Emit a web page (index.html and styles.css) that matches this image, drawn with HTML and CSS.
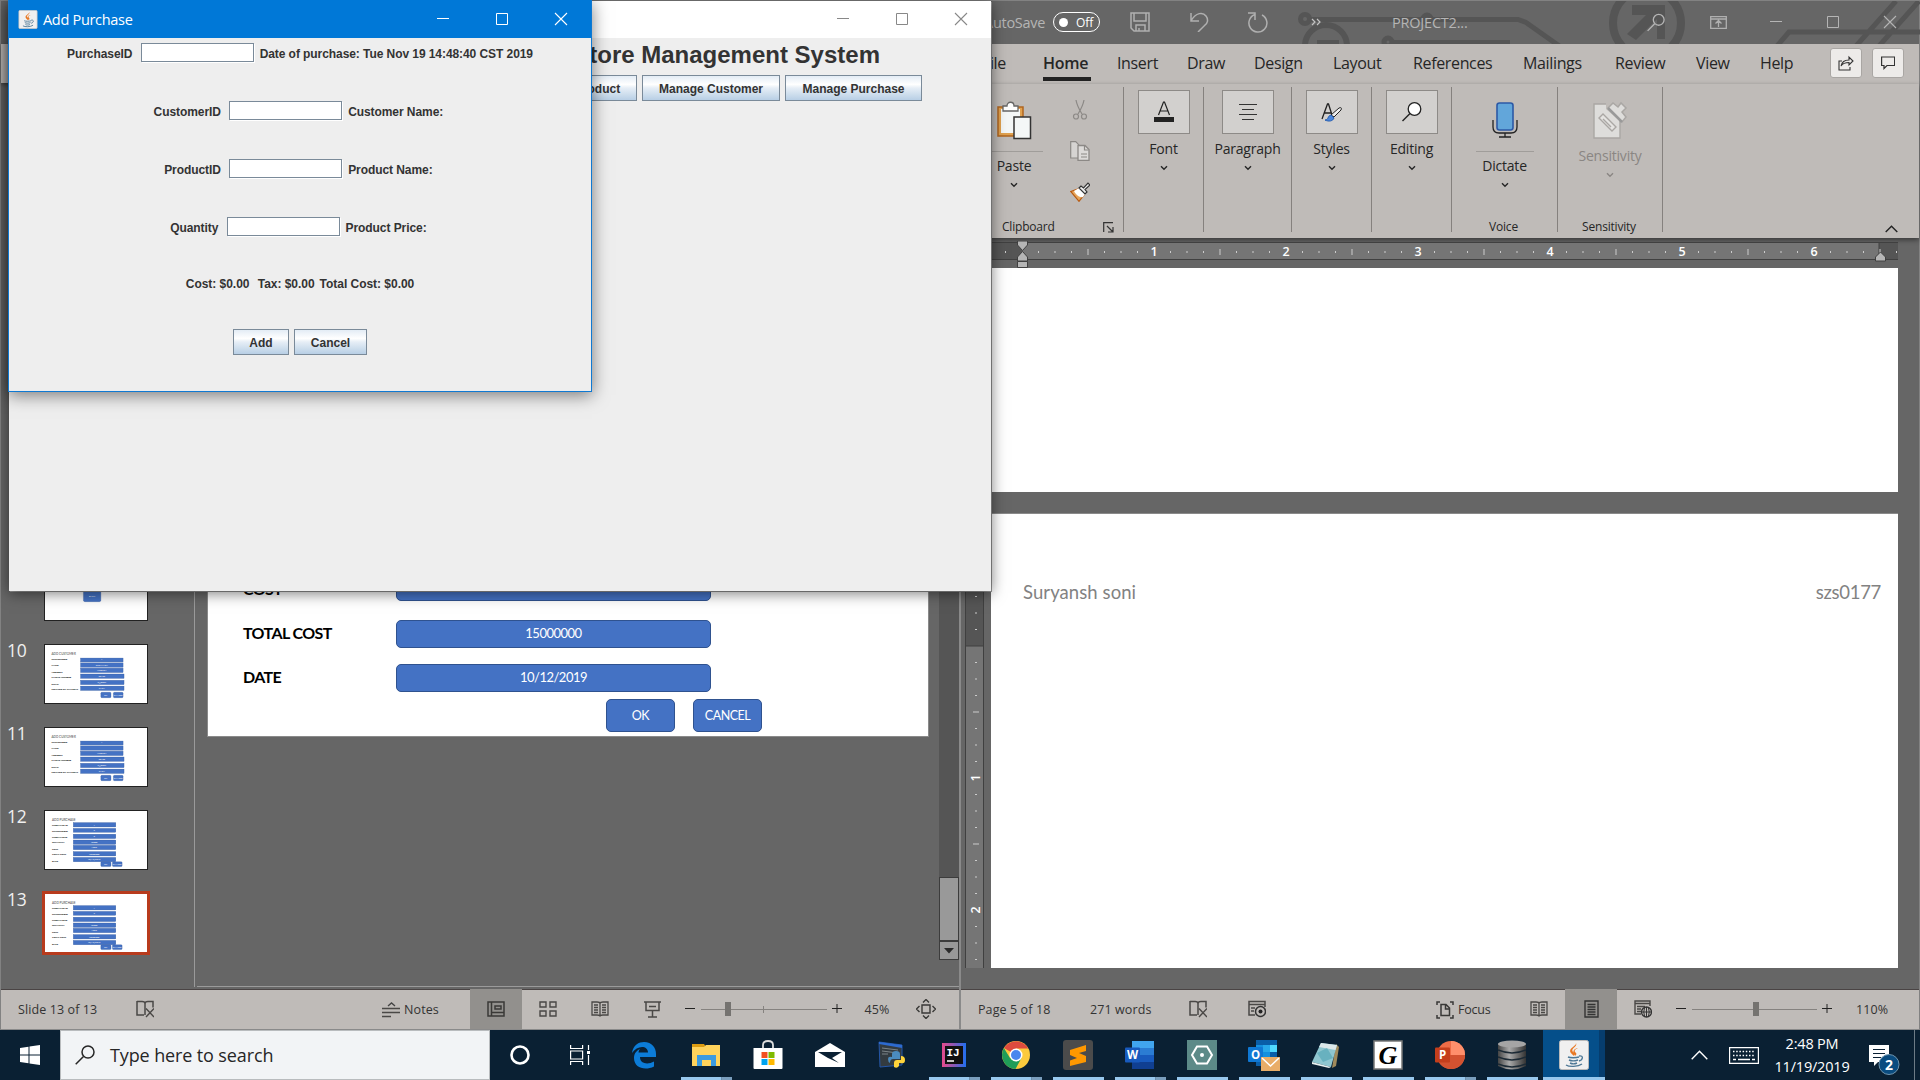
FILE: index.html
```html
<!DOCTYPE html>
<html lang="en">
<head>
<meta charset="utf-8">
<title>Desktop</title>
<link rel="stylesheet" href="styles.css">
</head>
<body>
<svg class="defs" width="0" height="0">
  <symbol id="chev" viewBox="0 0 8 6"><path d="M1 1.2l3 3 3-3" fill="none" stroke="currentColor" stroke-width="1.4"/></symbol>
  <symbol id="min" viewBox="0 0 14 14"><path d="M1 6.5h12" stroke="currentColor"/></symbol>
  <symbol id="max" viewBox="0 0 14 14"><path d="M1.5 1.5h11v11h-11z" fill="none" stroke="currentColor"/></symbol>
  <symbol id="cls" viewBox="0 0 14 14"><path d="M1 1l12 12M13 1L1 13" stroke="currentColor" stroke-width="1.1"/></symbol>
  <symbol id="java" viewBox="0 0 30 30">
    <rect x=".5" y=".5" width="29" height="29" rx="2" fill="#f0f0f0" stroke="#b9b9b9"/>
    <path d="M17 3c2 4-6 5-3 9 1 2 2 2 1 4-5-4-5-6-1-9 2-2 3-2 3-4zM19 8c-4 2-4 3-2 5 1 1 0 2-1 3 0-2-3-3-1-6 1-1 2-2 4-2z" fill="#e87722"/>
    <path d="M9 17c2 1 8 1 11 0M10 20c2 1 6 1 9 0M11 23c2 1 5 1 7 0M20 16c5-1 4 4 0 5M7 25c3 2 12 2 16-1" fill="none" stroke="#4d7896" stroke-width="1.4"/>
  </symbol>
  <symbol id="proof" viewBox="0 0 18 18"><path d="M9 3v12M1 1.500h5q3 0 3 2 0-2 3-2h5v6M1 1v14h7M9 14.500" fill="none" stroke="#4a4846" stroke-width="1.500"/><path d="M10 8.500l8 8.500M18 8.500L10 17" stroke="#4a4846" stroke-width="1.400"/></symbol>
  <symbol id="read" viewBox="0 0 18 18"><path d="M9 3v13M1 2h5q3 0 3 1.500Q9 2 12 2h5v13h-5q-3 0-3 1.500Q9 15 6 15H1zM3 5h4M3 7.500h4M3 10h4M3 12.500h4M11 5h4M11 7.500h4M11 10h4M11 12.500h4" fill="none" stroke="#4a4846" stroke-width="1.300"/></symbol>
  <symbol id="mag" viewBox="0 0 20 20"><circle cx="13" cy="7" r="6" fill="none" stroke="currentColor" stroke-width="1.500"/><path d="M8.500 11.500L.7 19.300" stroke="currentColor" stroke-width="1.500"/></symbol>
</svg>

<main class="desktop">
  <section class="app ppt">
    <div class="ppt-title"></div>
    <div class="ppt-ribbon"></div>
    <div class="ppt-body">
      <aside class="slides">
        <div class="slide-item"><span></span>
          <svg class="thumb" viewBox="0 0 104 60"><rect class="bar" x="39" y="28" width="18" height="13" rx="1.500"/><text class="tw" x="48" y="36.500">BACK</text></svg></div>
        <div class="slide-item"><span>10</span>
          <svg class="thumb" viewBox="0 0 104 60"><text class="tt" x="6" y="10">ADD CUSTOMER</text>
            <g class="tl"><text x="6" y="16">CUSTOMERID</text><text x="6" y="22">NAME</text><text x="6" y="28.500">ADDRESS</text><text x="6" y="34.500">PHONE NUMBER</text><text x="6" y="41">EMAIL</text><text x="6" y="47">METHOD OF PAYMENT</text></g>
            <g class="bar"><rect x="36" y="13.500" width="44" height="4"/><rect x="36" y="18.500" width="44" height="4.500"/><rect x="36" y="24" width="44" height="4.500"/><rect x="36" y="30" width="45" height="4.500"/><rect x="36" y="36.500" width="45" height="4.500"/><rect x="36" y="42.500" width="45" height="4.500"/><rect x="57" y="49" width="10.500" height="5.500" rx="1"/><rect x="70" y="49" width="10" height="5.500" rx="1"/></g>
            <g class="tw"><text x="58" y="16">1</text><text x="58" y="21.500">SURYANSH</text><text x="58" y="27">AUBURN</text><text x="58" y="33">33456</text><text x="58" y="39.500">S@gmail</text><text x="58" y="45.500">CASH</text><text x="62" y="52.500">OK</text><text x="75" y="52.500">CANCEL</text></g></svg></div>
        <div class="slide-item"><span>11</span>
          <svg class="thumb" viewBox="0 0 104 60"><text class="tt" x="6" y="10">ADD CUSTOMER</text>
            <g class="tl"><text x="6" y="16">CUSTOMERID</text><text x="6" y="22">NAME</text><text x="6" y="28.500">ADDRESS</text><text x="6" y="34.500">PHONE NUMBER</text><text x="6" y="41">EMAIL</text><text x="6" y="47">METHOD OF PAYMENT</text></g>
            <g class="bar"><rect x="36" y="13.500" width="44" height="4"/><rect x="36" y="18.500" width="44" height="4.500"/><rect x="36" y="24" width="44" height="4.500"/><rect x="36" y="30" width="45" height="4.500"/><rect x="36" y="36.500" width="45" height="4.500"/><rect x="36" y="42.500" width="45" height="4.500"/><rect x="57" y="49" width="10.500" height="5.500" rx="1"/><rect x="70" y="49" width="10" height="5.500" rx="1"/></g>
            <g class="tw"><text x="58" y="16">1</text><text x="58" y="27">AUBURN</text><text x="58" y="33">33456</text><text x="58" y="39.500">S@gmail</text><text x="58" y="45.500">CASH</text><text x="62" y="52.500">OK</text><text x="75" y="52.500">CANCEL</text></g></svg></div>
        <div class="slide-item"><span>12</span>
          <svg class="thumb" viewBox="0 0 104 60"><text class="tt" x="6.500" y="10">ADD PURCHASE</text>
            <g class="tl"><text x="6.500" y="15">PURCHASE ID</text><text x="6.500" y="21.500">CUSTOMERID</text><text x="6.500" y="27.500">PURCHASEID</text><text x="6.500" y="33.500">QUANTITY</text><text x="6.500" y="40">COST</text><text x="6.500" y="46">TOTAL COST</text><text x="6.500" y="52.500">DATE</text></g>
            <g class="bar"><rect x="28.500" y="12" width="44" height="4.500"/><rect x="28.500" y="18" width="44" height="4"/><rect x="28.500" y="24" width="44" height="4.500"/><rect x="28.500" y="30" width="44" height="4.500"/><rect x="28.500" y="35.500" width="44" height="4.500"/><rect x="28.500" y="42" width="44" height="4.500"/><rect x="28.500" y="48" width="44" height="4.500"/><rect x="57" y="52.500" width="10.500" height="5" rx="1"/><rect x="69" y="52.500" width="10" height="5" rx="1"/></g>
            <g class="tw"><text x="50" y="15">1</text><text x="50" y="21">2</text><text x="50" y="27">3</text><text x="50" y="33">10000</text><text x="50" y="38.500">1500</text><text x="50" y="45">15000000</text><text x="50" y="51">10/12/2019</text><text x="62" y="56">OK</text><text x="74" y="56">CANCEL</text></g></svg></div>
        <div class="slide-item current"><span>13</span>
          <svg class="thumb" viewBox="0 0 104 60"><text class="tt" x="6.500" y="10">ADD PURCHASE</text>
            <g class="tl"><text x="6.500" y="15">PURCHASE ID</text><text x="6.500" y="21.500">CUSTOMERID</text><text x="6.500" y="27.500">PURCHASEID</text><text x="6.500" y="33.500">QUANTITY</text><text x="6.500" y="40">COST</text><text x="6.500" y="46">TOTAL COST</text><text x="6.500" y="52.500">DATE</text></g>
            <g class="bar"><rect x="28.500" y="12" width="44" height="4.500"/><rect x="28.500" y="18" width="44" height="4"/><rect x="28.500" y="24" width="44" height="4.500"/><rect x="28.500" y="30" width="44" height="4.500"/><rect x="28.500" y="35.500" width="44" height="4.500"/><rect x="28.500" y="42" width="44" height="4.500"/><rect x="28.500" y="48" width="44" height="4.500"/><rect x="57" y="52.500" width="10.500" height="5" rx="1"/><rect x="69" y="52.500" width="10" height="5" rx="1"/></g>
            <g class="tw"><text x="50" y="15">1</text><text x="50" y="21">2</text><text x="50" y="33">10000</text><text x="50" y="38.500">1500</text><text x="50" y="45">15000000</text><text x="50" y="51">10/12/2019</text><text x="62" y="56">OK</text><text x="74" y="56">CANCEL</text></g></svg></div>
      </aside>
      <div class="stage">
        <div class="slide">
          <div class="srow first"><b>COST</b><div class="sfield"></div></div>
          <div class="srow"><b>TOTAL COST</b><div class="sfield">15000000</div></div>
          <div class="srow"><b>DATE</b><div class="sfield">10/12/2019</div></div>
          <div class="sbtns"><div>OK</div><div>CANCEL</div></div>
        </div>
        <div class="vscroll"><div class="track"></div><div class="grip"></div><div class="down"><svg width="10" height="7"><path d="M0 1h10L5 6.500z" fill="#2b2b2b"/></svg></div></div>
      </div>
    </div>
    <footer class="status status-ppt">
      <span>Slide 13 of 13</span>
      <svg width="18" height="18"><use href="#proof"/></svg>
      <span class="notes"><svg width="18" height="16" viewBox="0 0 18 16"><path d="M6 4l3.500-3L13 4" fill="none" stroke="#444" stroke-width="1.400"/><path d="M0 6.500h18M0 10.500h18M0 14.500h9" stroke="#4a4846" stroke-width="1.500"/></svg>Notes</span>
      <i class="cell on"><svg width="18" height="16" viewBox="0 0 18 16"><path d="M1 1h16v14H1zM4.500 1v14M4.500 11.500H17M8 5h6v3H8z" fill="none" stroke="#3a3937" stroke-width="1.500"/></svg></i>
      <i class="cell"><svg width="18" height="16" viewBox="0 0 18 16"><path d="M1 1h6v5H1zM11 1h6v5h-6zM1 10h6v5H1zM11 10h6v5h-6z" fill="none" stroke="#4a4846" stroke-width="1.400"/></svg></i>
      <i class="cell"><svg width="18" height="18"><use href="#read"/></svg></i>
      <i class="cell"><svg width="17" height="17" viewBox="0 0 17 17"><path d="M0 1h17M2 1v8.500h13V1M5 5.500h7M8.500 9.500V16M4 16h9" fill="none" stroke="#4a4846" stroke-width="1.500"/></svg></i>
      <i class="cell"><svg width="10" height="10"><path d="M0 4.500h10" stroke="#222"/></svg></i>
      <i class="slider slider-mid"><i></i></i>
      <i class="cell"><svg width="10" height="10"><path d="M0 4.500h10M5 0v9" stroke="#222"/></svg></i>
      <span class="pct">45%</span>
      <i class="cell"><svg width="20" height="20" viewBox="0 0 20 20"><path d="M6 6h8v8H6zM7 3.500l3-3 3 3M7 16.500l3 3 3-3M3.500 7l-3 3 3 3M16.500 7l3 3-3 3" fill="none" stroke="#3a3937" stroke-width="1.400"/></svg></i>
    </footer>
  </section>

  <section class="app word">
    <header class="word-title">
      <svg class="circuit" viewBox="0 0 959 43" width="959" height="43"><g fill="none" stroke="#555" stroke-width="5"><circle cx="344" cy="18" r="4.500"/><path d="M349 18.500h114M471 18.500h86l8 3 34 24"/><circle cx="466" cy="18" r="4"/><circle cx="427" cy="41" r="4"/><path d="M431 41.500h118"/><path d="M344 45a19 19 0 0 1 42 0" stroke-width="6"/><circle cx="686" cy="22" r="34" stroke-width="8"/><path d="M816 45l12-14h131M895 45L935 0M918 45L958 0"/></g><path d="M671 4h33v34h-8V18l-21 21-9-6 19-19h-14zM356 39h22v6h-22z" fill="#555"/></svg>
      <span class="autosave">AutoSave</span>
      <span class="toggle"><i></i>Off</span>
      <svg width="20" height="20" viewBox="0 0 20 20"><path d="M1 1h18v18H4l-3-3zM4 1v8h12V1M6 19v-6h9v6M9 19v-3" fill="none" stroke="#b0b0b0" stroke-width="1.500"/></svg>
      <svg width="20" height="20" viewBox="0 0 20 20"><path d="M1 1v8h8M1 9c5-9 12-9 15-5s1 8-1 9l-7 7" fill="none" stroke="#b0b0b0" stroke-width="1.500"/></svg>
      <svg width="21" height="21" viewBox="0 0 21 21"><path d="M1 1h7v7M8 2.500A9 9 0 1 0 15 3" fill="none" stroke="#b0b0b0" stroke-width="1.500"/></svg>
      <svg width="10" height="8" viewBox="0 0 10 8"><path d="M1 1l3 3-3 3M6 1l3 3-3 3" fill="none" stroke="#c4c4c4" stroke-width="1.200"/></svg>
      <span class="doc">PROJECT2...</span>
      <svg width="18" height="19"><use href="#mag"/></svg>
      <svg width="17" height="13" viewBox="0 0 17 13"><path d="M.7.7h15.600v11.600H.7zM1 3h15M8.500 11V5M5.500 7.500l3-3 3 3" fill="none" stroke="#b0b0b0" stroke-width="1.300"/></svg>
      <svg width="14" height="14"><use href="#min"/></svg>
      <svg width="14" height="14"><use href="#max"/></svg>
      <svg width="14" height="14"><use href="#cls"/></svg>
    </header>
    <nav class="tabs">
      <span>File</span><span class="active">Home</span><span>Insert</span><span>Draw</span><span>Design</span><span>Layout</span><span>References</span><span>Mailings</span><span>Review</span><span>View</span><span>Help</span>
      <button class="tool"><svg width="16" height="16" viewBox="0 0 16 16"><path d="M4 6H1v9h11v-3M3 11c1-5 4-6 8-6V2l4 4-4 4V7.500c-4 0-6 .5-8 3.500z" fill="none" stroke="#333" stroke-width="1.100"/></svg></button>
      <button class="tool"><svg width="14" height="14" viewBox="0 0 14 14"><path d="M.6 1h13v8.500H6L3 12.500v-3H.6z" fill="none" stroke="#333" stroke-width="1.200"/></svg></button>
    </nav>
    <div class="ribbon">
      <div class="group clip">
        <div class="clip-main">
          <div class="split paste">
            <svg width="36" height="40" viewBox="0 0 36 40"><path d="M2 6h25v29H2z" fill="#e0a14f" stroke="#b0651f" stroke-width="1.500"/><path d="M5 8h19v24H5z" fill="#f4f7f7"/><path d="M7 10V5h4c0-5 7-5 7 0h4v5z" fill="#fff" stroke="#666" stroke-width="1.300"/><path d="M18 16h16.500v21.500H18z" fill="#f4f7f7" stroke="#333" stroke-width="1.500"/></svg>
            <hr><span>Paste</span><svg width="8" height="6"><use href="#chev"/></svg>
          </div>
          <div class="clip-tools">
            <svg width="20" height="20" viewBox="0 0 20 20"><g fill="none" stroke="#8c8986" stroke-width="1.200"><path d="M6 0c1 6 3 9 6 14M14 0c-1 6-3 9-6 14"/><circle cx="6" cy="16.500" r="2.500"/><circle cx="14" cy="16.500" r="2.500"/></g></svg>
            <svg width="20" height="20" viewBox="0 0 20 20"><path d="M.7.7h5l3 3V17h-8z" fill="#d6d4d2" stroke="#8c8986" stroke-width="1.200"/><path d="M8 4.500h7l4 4v11H8z" fill="#dddbd9" stroke="#8c8986" stroke-width="1.300"/><path d="M14.500 5v4h4M11 13h6M11 16h6" fill="none" stroke="#8c8986" stroke-width="1.200"/></svg>
            <svg width="20" height="20" viewBox="0 0 20 20"><path d="M.7 9.500L8 7l6 6-5 6.300z" fill="#e6a65c" stroke="#b85a10" stroke-width="1.200"/><path d="M4 9l5-3 6 6-2 3c-3 1-7-2-9-6z" fill="#fff"/><path d="M9 6l2-2 2.500 2L18 1l2 2-5 4.500L17 10l-2 2z" fill="#eee" stroke="#333" stroke-width="1.200"/></svg>
          </div>
        </div>
        <div class="caption clip-cap">Clipboard<svg width="11" height="11" viewBox="0 0 11 11"><path d="M10 .7H.7V10M4 4l6 6M10 5v5H5" fill="none" stroke="#333" stroke-width="1.200"/></svg></div>
      </div>
      <div class="group"><div class="big"><svg width="20" height="22" viewBox="0 0 20 22"><path d="M4.500 14L9.500 1h1l5 13M6 10h8" fill="none" stroke="#222" stroke-width="1.200"/><path d="M0 16h20v5H0z" fill="#222"/></svg></div><span>Font</span><svg width="8" height="6"><use href="#chev"/></svg></div>
      <div class="group"><div class="big"><svg width="18" height="18" viewBox="0 0 18 18"><path d="M0 1.500h18M3 6.500h12M0 11.500h18M3 16.500h12" stroke="#333" stroke-width="1.200"/></svg></div><span>Paragraph</span><svg width="8" height="6"><use href="#chev"/></svg></div>
      <div class="group"><div class="big"><svg width="21" height="20" viewBox="0 0 21 20"><path d="M1 17L6.500 2h1L11 13M3 11h7" fill="none" stroke="#222" stroke-width="1.300"/><path d="M10 13l8-7c2-1 3 0 2 2l-7 7z" fill="#eee" stroke="#222"/><path d="M4 18c4 0 2-4 6-5l3 3c-1 3-5 4-9 2z" fill="#4a86dc" stroke="#225bb0"/></svg></div><span>Styles</span><svg width="8" height="6"><use href="#chev"/></svg></div>
      <div class="group"><div class="big"><svg width="20" height="20" viewBox="0 0 20 20"><circle cx="12.500" cy="7" r="6.300" fill="#fff" stroke="#222" stroke-width="1.300"/><path d="M8 11.500L.5 19" stroke="#222" stroke-width="1.400"/></svg></div><span>Editing</span><svg width="8" height="6"><use href="#chev"/></svg></div>
      <div class="group voice">
        <div class="split"><svg width="26" height="40" viewBox="0 0 26 40"><rect x="5" y="2" width="16" height="27" rx="2.500" fill="#62a6da" stroke="#2c59a6" stroke-width="1.600"/><path d="M1 19v7q0 6 6 6h12q6 0 6-6v-7M13 32v4M7 36h12" fill="none" stroke="#222" stroke-width="1.300"/></svg>
        <hr><span>Dictate</span><svg width="8" height="6"><use href="#chev"/></svg></div>
        <div class="caption">Voice</div>
      </div>
      <div class="group voice sens">
        <div class="split"><svg width="36" height="40" viewBox="0 0 36 40"><path d="M2 3h26v34H2z" fill="#dedddb" stroke="#aaa7a4" stroke-width="1.400"/><path d="M14 0h22v22h-6L14 8z" fill="#bfbbb8"/><path d="M7 17l4-4 13 13-4 4zM11 18l8 8" fill="#e5e4e2" stroke="#aaa7a4" stroke-width="1.400"/><path d="M16 7l5-5 5 4 3-4 5 5-4 4 4 5-4 5z" fill="#dedddb" stroke="#aaa7a4" stroke-width="1.500"/><path d="M16 7l14 14" stroke="#999" stroke-width="2.500"/></svg>
        <span>Sensitivity</span><svg width="8" height="6"><use href="#chev"/></svg></div>
        <div class="caption">Sensitivity</div>
      </div>
      <svg class="collapse" width="13" height="8" viewBox="0 0 13 8"><path d="M.7 7L6.500 1.300 12.300 7" fill="none" stroke="#222" stroke-width="1.400"/></svg>
    </div>
    <div class="word-body">
      <svg class="vruler" width="19" height="730" viewBox="0 238 19 730">
        <defs><pattern id="vt" width="19" height="132" patternUnits="userSpaceOnUse" y="646"><path d="M10 16.500h2M10 33h2M10 49.500h2M8 66h6M10 82.500h2M10 99h2M10 115.500h2" stroke="#ccc"/></pattern></defs>
        <path d="M0 238h19v408H0z" fill="#555"/><path d="M0 646h19v322H0z" fill="#757575"/><path d="M.5 238v730M18.500 238v730M0 646h19" stroke="#404040"/>
        <rect y="238" width="19" height="730" fill="url(#vt)"/>
        <text transform="translate(15 778) rotate(-90)">1</text><text transform="translate(15 910) rotate(-90)">2</text>
      </svg>
      <div class="doc-col">
        <svg class="hruler" width="907" height="27" viewBox="991 241 907 27">
          <defs><pattern id="ht" width="132" height="20" patternUnits="userSpaceOnUse" x="1022" y="242"><path d="M16.500 9v2M33 9v2M49.500 9v2M66 7v6M82.500 9v2M99 9v2M115.500 9v2" stroke="#ccc"/></pattern></defs>
          <path d="M991 242h907v18H991z" fill="#555"/><path d="M1022 242h857v18h-857z" fill="#757575"/><path d="M991 242.500h907M991 259.500h907M1879 242v18" stroke="#404040"/>
          <rect x="991" y="242" width="907" height="18" fill="url(#ht)"/>
          <text x="1154" y="256">1</text><text x="1286" y="256">2</text><text x="1418" y="256">3</text><text x="1550" y="256">4</text><text x="1682" y="256">5</text><text x="1814" y="256">6</text>
          <path d="M1017.500 241v4l5 5.500 5-5.500v-4zM1017.500 261v-4l5-5.500 5 5.500v4zM1017.500 261.500h10v6h-10zM1875.500 261v-4l5-5 5 5v4z" fill="#b5b5b5" stroke="#404040"/>
        </svg>
        <div class="page page-a"></div>
        <div class="page page-b"><span>Suryansh soni</span><span>szs0177</span></div>
      </div>
    </div>
    <footer class="status status-word">
      <span>Page 5 of 18</span><span>271 words</span>
      <svg width="18" height="18"><use href="#proof"/></svg>
      <svg width="18" height="18" viewBox="0 0 18 18"><path d="M17 7V1.500H1V15h6M1 4.500h16M3 8h4M3 11h3" fill="none" stroke="#4a4846" stroke-width="1.500"/><circle cx="12.500" cy="11.500" r="5" fill="#bfbbb8" stroke="#333" stroke-width="1.500"/><circle cx="12.500" cy="11.500" r="2" fill="#222"/></svg>
      <span class="notes focus"><svg width="18" height="18" viewBox="0 0 18 18"><path d="M4 1H1v3M14 1h3v3M4 17H1v-3M14 17h3v-3M5 3.500h5l3.500 3.500v7.500H5zM9.500 4v4h4" fill="none" stroke="#3a3937" stroke-width="1.500"/></svg>Focus</span>
      <i class="cell"><svg width="18" height="18"><use href="#read"/></svg></i>
      <i class="cell on"><svg width="15" height="18" viewBox="0 0 15 18"><path d="M1 1h13v16H1zM3.500 4.500h8M3.500 7h8M3.500 9.500h8M3.500 12h8M3.500 14.500h8" fill="none" stroke="#333" stroke-width="1.400"/></svg></i>
      <i class="cell"><svg width="18" height="18" viewBox="0 0 18 18"><path d="M16 6V1H1v13h6M1 3.500h15M3 6.500h8M3 9h4M3 11.500h4" fill="none" stroke="#4a4846" stroke-width="1.400"/><circle cx="12.500" cy="12" r="5" fill="#bfbbb8" stroke="#333" stroke-width="1.300"/><path d="M8 12h9M12.500 7v10M10.500 8q-1.500 4 0 8M14.500 8q1.500 4 0 8" fill="none" stroke="#333"/></svg></i>
      <i class="cell"><svg width="10" height="10"><path d="M0 4.500h10" stroke="#222"/></svg></i>
      <i class="slider slider-word"><i></i></i>
      <i class="cell"><svg width="10" height="10"><path d="M0 4.500h10M5 0v9" stroke="#222"/></svg></i>
      <span class="pct">110%</span>
    </footer>
  </section>

  <section class="jwin main-win">
    <header class="jtitle light"><svg width="14" height="14"><use href="#min"/></svg><svg width="14" height="14"><use href="#max"/></svg><svg width="14" height="14"><use href="#cls"/></svg></header>
    <h1>Store Management System</h1>
    <div class="jbuttons"><button>Manage Product</button><button>Manage Customer</button><button>Manage Purchase</button></div>
  </section>

  <section class="jwin dialog">
    <header class="jtitle"><svg class="ico" width="20" height="19" preserveAspectRatio="none"><use href="#java"/></svg><span>Add Purchase</span><svg width="14" height="14"><use href="#min"/></svg><svg width="14" height="14"><use href="#max"/></svg><svg width="14" height="14"><use href="#cls"/></svg></header>
    <form class="form">
      <div class="frow"><label>PurchaseID&nbsp;</label><input><label>Date of purchase: Tue Nov 19 14:48:40 CST 2019</label></div>
      <div class="frow r2"><label>CustomerID&nbsp;</label><input><label>Customer Name:&nbsp;</label></div>
      <div class="frow r3"><label>ProductID&nbsp;</label><input><label>Product Name:&nbsp;</label></div>
      <div class="frow r4"><label>Quantity&nbsp;</label><input><label>Product Price:&nbsp;</label></div>
      <div class="frow r5"><label>Cost: $0.00&nbsp;</label><label>Tax: $0.00</label><label>Total Cost: $0.00</label></div>
      <div class="frow r6"><button type="button">Add</button><button type="button">Cancel</button></div>
    </form>
  </section>
</main>

<footer class="taskbar">
  <div class="start"><svg width="20" height="20" viewBox="0 0 20 20"><path d="M0 3l8.500-1.200v7.700H0zM9.500 1.600L20 0v9.500H9.500zM0 10.500h8.500v7.700L0 17zM9.500 10.500H20V20L9.500 18.400z" fill="#fff"/></svg></div>
  <div class="search"><svg width="20" height="20"><use href="#mag"/></svg>Type here to search</div>
  <div class="t cort"><svg width="20" height="20"><circle cx="10" cy="10" r="8.500" fill="none" stroke="#fff" stroke-width="2.600"/></svg></div>
  <div class="t view"><svg width="20" height="20" viewBox="0 0 20 20"><path d="M.6 0v3.500h12V0M.6 20v-3.500h12V20M.6 6h12v8H.6zM18.500 0v5M18.500 10v10" fill="none" stroke="#fff" stroke-width="1.200"/><path d="M17 6h3v3h-3z" fill="#fff"/></svg></div>
  <div class="t"><svg width="26" height="28" viewBox="0 0 26 28"><path d="M1 12C2 4 8 1 13 1c8 0 12 6 12 12v3H9c0 7 8 8 14 4.500v5C14 30 3 27 3 17c0-5 3-7.500 6-9-1 1-1.500 2.500-1.500 3.500H17C17 4 6 4 1 12z" fill="#0c7cd8"/></svg></div>
  <div class="t run stack"><svg width="28" height="24" viewBox="0 0 28 24"><path d="M0 1h12l2 3H0z" fill="#dc9c12"/><path d="M0 4h12l2-2h14v21H0z" fill="#ffd35c"/><path d="M5 23V12h19v11h-5v-6h-9v6z" fill="#3c9be0"/></svg></div>
  <div class="t"><svg width="30" height="30" viewBox="0 0 30 30"><path d="M10 9V5q0-4 5-4t5 4v4" fill="none" stroke="#ddd" stroke-width="1.800"/><path d="M.5 8h29v20q0 1-1 1h-27q-1 0-1-1z" fill="#fff"/><path d="M8.500 12h6v6h-6z" fill="#f25022"/><path d="M15.500 12h6v6h-6z" fill="#7fba00"/><path d="M8.500 19h6v6h-6z" fill="#00a4ef"/><path d="M15.500 19h6v6h-6z" fill="#ffb900"/></svg></div>
  <div class="t"><svg width="30" height="24" viewBox="0 0 30 24"><path d="M0 9L15 0l15 9v15H0z" fill="#fff"/><path d="M3 9h24l-10 6 7 5-11-5z" fill="#0a2033"/></svg></div>
  <div class="t"><svg width="28" height="28" viewBox="0 0 28 28"><path d="M1 1l23 3v20L2 26z" fill="#333b40" stroke="#2456a8"/><path d="M1 1l23 3v3L1 3z" fill="#2d6bd0"/><path d="M4 7l16 2M4 10l12 1.500M4 13h6" stroke="#7d8588"/><path d="M14 16v-3q0-3 4-3t4 3v5h-7q-3 0-3 4-2-1-2-4t4-2z" fill="#4b8bbe"/><path d="M16 26v-4q0-3 3-3h4v-4q4 0 4 4t-4 3h-2v3q-2 3-5 1z" fill="#ffd43b"/></svg></div>
  <div class="t run stack"><svg width="24" height="24" viewBox="0 0 24 24"><defs><linearGradient id="ij" x2="1"><stop stop-color="#e64b8c"/><stop offset=".5" stop-color="#8a58b5"/><stop offset="1" stop-color="#1f6ff0"/></linearGradient></defs><path d="M0 0h24v24H0z" fill="url(#ij)"/><path d="M3 3h18v18H3z" fill="#101010"/><text class="ijt" x="4.500" y="13">IJ</text><path d="M5 18h7" stroke="#fff" stroke-width="1.500"/></svg></div>
  <div class="t run stack"><svg width="28" height="28" viewBox="0 0 28 28"><circle cx="14" cy="14" r="14" fill="#fbca3d"/><path d="M14 14L2 7A14 14 0 0 1 26.200 7.500H14z" fill="#dd4b3e"/><path d="M14 20l-6-3L1.900 7A14 14 0 0 0 13.500 28l6-11z" fill="#1f9d58"/><circle cx="14" cy="14" r="6.500" fill="#fff"/><circle cx="14" cy="14" r="5" fill="#4a87ee"/></svg></div>
  <div class="t run"><svg width="30" height="30" viewBox="0 0 30 30"><rect width="30" height="30" rx="3" fill="#4b4b4b"/><path d="M7 10l16-5v6l-7 2 7 3v6L7 26v-5.500l7-2.500-7-3z" fill="#ff9800"/></svg></div>
  <div class="t run stack"><svg width="30" height="28" viewBox="0 0 30 28"><path d="M7 0h22v7H7z" fill="#41a5ee"/><path d="M7 7h22v7H7z" fill="#2b7cd3"/><path d="M7 14h22v7H7z" fill="#185abd"/><path d="M7 21h22v7H7z" fill="#103f91"/><rect y="6.500" width="15" height="15" rx="1" fill="#185abd"/><text class="lt" x="7.500" y="18">W</text></svg></div>
  <div class="t run"><svg width="30" height="30" viewBox="0 0 30 30"><path d="M0 0h30v30H0z" fill="#5c8a88"/><path d="M10 6.500h10l5 8.500-5 8.500H10L5 15z" fill="none" stroke="#fff" stroke-width="2"/><circle cx="15" cy="15" r="2" fill="#fff"/></svg></div>
  <div class="t run"><svg width="32" height="32" viewBox="0 0 32 32"><path d="M8 1h21v26H8z" fill="#0a5ea8"/><path d="M8 6h7v7H8zM15 13h7v7h-7z" fill="#1490df"/><path d="M15 6h7v7h-7z" fill="#28a8ea"/><path d="M22 6h7v7h-7z" fill="#50d9ff"/><rect y="8" width="15" height="15" rx="1" fill="#0f78d4"/><text class="lt" x="7.500" y="19.500">O</text><path d="M13 18h19v14H13z" fill="#e9ad68"/><path d="M14 19l8.500 8 8.500-8" fill="none" stroke="#fff" stroke-width="1.500"/></svg></div>
  <div class="t run"><svg width="28" height="28" viewBox="0 0 28 28"><path d="M24 3l3 3-3 19-4 2z" fill="#a08a5c"/><path d="M9 2l16 2-6 22L0 21z" fill="#8fc6d0"/><path d="M9 2l16 2-1.500 5L7 6z" fill="#dce8ea"/><path d="M5 12l10-5 6 10-10 4z" fill="#4ea4b4" opacity=".6"/><path d="M0 21l19 5-2 1L0 23z" fill="#e8f0f0"/></svg></div>
  <div class="t run"><svg width="30" height="30" viewBox="0 0 30 30"><path d="M1 1h28v28H1z" fill="#fff" stroke="#777" stroke-width="1.500"/><text class="gt" x="15" y="24">G</text></svg></div>
  <div class="t run stack"><svg width="30" height="28" viewBox="0 0 30 28"><circle cx="16" cy="14" r="14" fill="#ed6c47"/><path d="M16 0a14 14 0 0 1 14 14H16z" fill="#ff8f6b"/><path d="M2 14h28a14 14 0 0 1-28 0z" fill="#d35230"/><rect y="6.500" width="15" height="15" rx="1" fill="#c43e1c"/><text class="lt" x="7.500" y="18">P</text></svg></div>
  <div class="t run"><svg width="28" height="30" viewBox="0 0 28 30"><defs><linearGradient id="db" x2="1"><stop stop-color="#444"/><stop offset=".4" stop-color="#aaa"/><stop offset="1" stop-color="#333"/></linearGradient></defs><path d="M0 4q14-6 28 0v22q-14 7-28 0z" fill="url(#db)"/><ellipse cx="14" cy="4" rx="14" ry="3.500" fill="#a5a5a5"/><path d="M0 10q14 6 28 0M0 17q14 6 28 0M0 24q14 6 28 0" fill="none" stroke="#1c2a35" stroke-width="1.500"/></svg></div>
  <div class="t run active"><svg width="30" height="30"><use href="#java"/></svg></div>
  <div class="tray">
    <svg width="17" height="10" viewBox="0 0 17 10"><path d="M.7 9.300l7.800-8 7.800 8" fill="none" stroke="#fff" stroke-width="1.400"/></svg>
    <svg width="30" height="17" viewBox="0 0 30 17"><path d="M.6.600h28.800v15.800H.6z" fill="none" stroke="#fff" stroke-width="1.200"/><path d="M4 4.500h22M4 8.500h22" stroke="#fff" stroke-width="1.400" stroke-dasharray="1.500 1.700"/><path d="M4 12.500h3M9 12.500h12M23 12.500h3" stroke="#fff" stroke-width="1.300"/></svg>
    <div class="clock"><span>2:48 PM</span><span>11/19/2019</span></div>
    <svg class="note" width="31" height="30" viewBox="0 0 31 30"><path d="M0 0h20v17H9l-4 4v-4H0z" fill="#fff"/><path d="M4 4.500h12M4 8.500h12M4 12.500h8" stroke="#0a2033" stroke-width="1.200"/><circle cx="20" cy="19.500" r="10" fill="#0a4c80" stroke="#6f94ad"/><text class="bt" x="20" y="25">2</text></svg>
    <i class="peek"></i>
  </div>
</footer>
</body>
</html>
```
FILE: styles.css
```css
* { box-sizing: border-box; }
body { margin: 0; width: 1920px; height: 1080px; overflow: hidden; background: #666; font-family: "Open Sans", "Noto Sans", sans-serif; color: #262626; }
svg { display: block; flex: none; }
button, input { margin: 0; padding: 0; font: inherit; color: inherit; border-radius: 0; }
i { font-style: normal; }
.defs { position: absolute; }

.desktop { position: relative; height: 1030px; display: flex; }
.app { height: 1030px; display: flex; flex-direction: column; background: #666; border-top: 1px solid #828282; border-bottom: 1px solid #8a8a8a; }
.ppt { width: 961px; border-left: 1px solid #828282; border-right: 2px solid #8a8a8a; }
.word { width: 959px; border-right: 1px solid #828282; }

/* PowerPoint */
.ppt-title { height: 43px; }
.ppt-ribbon { height: 39px; background: #bfbbb8; box-shadow: 0 2px 4px rgba(0,0,0,.4); }
.ppt-body { flex: 1; display: flex; min-height: 0; padding-bottom: 2px; }
.slides { width: 194px; border-right: 1px solid #9a9a9a; display: flex; flex-direction: column; justify-content: flex-end; gap: 23px; padding: 0 0 34px 6px; }
.slide-item { display: flex; height: 60px; }
.slide-item span { width: 37px; color: #f0f0f0; font-size: 17.5px; line-height: 13px; letter-spacing: -.3px; }
.thumb { width: 104px; height: 60px; background: #fff; border: 1px solid #222; }
.current .thumb { border-color: #fff; outline: 3px solid #b83b1d; outline-offset: -1px; }
.thumb text { font-family: Lato, sans-serif; }
.tt { font-size: 3.2px; fill: #444; }
.tl { font-size: 2.5px; font-weight: 900; fill: #000; }
.bar { fill: #4472c4; stroke: #2f5597; stroke-width: .3px; }
.tw { font-size: 2.4px; fill: #fff; text-anchor: middle; }
.stage { flex: 1; display: flex; justify-content: space-between; margin-left: 2px; border-bottom: 1px solid #9a9a9a; padding: 0 0 0 10px; }
.slide { width: 722px; height: 654px; background: #fff; border: 1px solid #8a8a8a; border-top: 0; padding-left: 35px; display: flex; flex-direction: column; justify-content: flex-end; padding-bottom: 4px; font-family: Lato, sans-serif; }
.srow { display: grid; grid-template-columns: 153px 315px; height: 28px; margin-bottom: 16px; align-items: center; }
.srow.first { margin-bottom: 20px; }
.srow b { color: #000; font-size: 16px; letter-spacing: -.6px; line-height: 26px; padding-bottom: 2px; }
.srow.first b { padding: 4px 0 0; }
.srow:nth-child(3) { margin-bottom: 7px; }
.sfield, .sbtns div { background: #4472c4; border: 1px solid #2f528f; border-radius: 5px; color: #fff; text-align: center; font-size: 13px; }
.sfield { height: 28px; line-height: 25px; letter-spacing: -.5px; }
.sbtns { display: flex; gap: 18px; padding-left: 363px; }
.sbtns div { width: 69px; height: 33px; line-height: 31px; font-size: 12.5px; letter-spacing: -.5px; }
.vscroll { width: 20px; display: flex; flex-direction: column; height: 877px; }
.track { flex: 1; background: #555; }
.grip { height: 64px; background: #999; border: 1px solid #3c3c3c; }
.down { height: 19px; background: #999; border: 1px solid #3c3c3c; display: grid; place-items: center; }

/* status bars */
.status { height: 40px; display: grid; align-items: center; background: #bfbbb8; box-shadow: inset 0 1px #4a4444; font-size: 12.5px; line-height: 38px; color: #333; white-space: nowrap; }
.status span { padding-top: 2px; letter-spacing: .1px; }
.status-ppt { grid-template-columns: 118px 246px 88px 52px 52px 52px 52px 23px 126px 20px 60px 38px; padding-left: 17px; }
.status-word { grid-template-columns: 112px 99px 59px 188px 77px 52px 52px 52px 23px 125px 20px 70px; padding-left: 17px; }
.notes { display: flex; align-items: center; gap: 4px; }
.status .focus { letter-spacing: -.2px; }
.cell { height: 40px; display: grid; place-items: center; }
.cell.on { background: #92908d; }
.pct { text-align: center; }
.slider { height: 14px; display: block; background: linear-gradient(#85827f, #85827f) 0 7px / 100% 1px no-repeat; }
.slider-mid { background: linear-gradient(#85827f, #85827f) 0 7px / 100% 1px no-repeat, linear-gradient(#85827f, #85827f) 62px 4px / 1px 7px no-repeat; }
.slider i { display: block; width: 6px; height: 14px; background: #757370; margin-left: 24px; }
.slider-word i { margin-left: 61px; }

/* Word */
.word-title { height: 43px; position: relative; display: grid; grid-template-columns: 92px 77px 60px 57px 64px 81px 255px 63px 59px 57px 57px 30px; align-items: center; color: #b5b5b5; font-size: 14.5px; padding-bottom: 1px; }
.word-title > * { position: relative; }
.word-title .circuit { position: absolute; left: 0; top: 0; }
.autosave { justify-self: end; padding-right: 8px; letter-spacing: -.3px; }
.toggle { width: 47px; height: 20px; border: 1px solid #fff; border-radius: 10px; display: flex; align-items: center; gap: 8px; padding-left: 5px; color: #fff; font-size: 12px; }
.toggle i { width: 9px; height: 9px; border-radius: 50%; background: #fff; }
.doc { letter-spacing: -.2px; }
.tabs { height: 40px; background: #bfbbb8; display: grid; grid-template-columns: 68px 74px 70px 67px 79px 80px 110px 92px 81px 64px 70px 42px 32px; align-items: center; padding: 0 0 2px 14px; font-size: 16px; letter-spacing: -.35px; }
.tabs span { white-space: nowrap; line-height: 38px; }
.tabs span:first-child { padding-left: 7px; }
.tabs .active { font-weight: 600; letter-spacing: -.3px; width: 48px; height: 35px; line-height: 35px; border-bottom: 4px solid #222; margin-top: 0; }
.tool { width: 32px; height: 30px; background: #edebe9; border: 1px solid #a9a6a3; border-radius: 3px; display: grid; place-items: center; }
.ribbon { height: 154px; background: #bfbbb8; display: flex; padding: 3px 21px 0 0; box-shadow: 0 2px 5px rgba(0,0,0,.45); font-size: 14px; letter-spacing: -.2px; }
.group { height: 145px; width: 80px; border-right: 1px solid #85817e; display: flex; flex-direction: column; align-items: center; padding-top: 3px; }
.group:nth-child(3) { width: 88px; }
.group .big { width: 52px; height: 44px; background: #d2d0ce; border: 1px solid #8d8a87; display: grid; place-items: center; }
.group > span { line-height: 20px; margin: 5px 0 6px; }
.group.clip { width: 163px; align-items: stretch; }
.clip-main { display: flex; flex: 1; }
.split { width: 58px; display: flex; flex-direction: column; align-items: center; flex: 1; }
.paste { flex: none; margin-left: 24px; padding-top: 10px; }
.split svg:first-child { margin-top: 1px; }
.split hr { width: 58px; border: 0; border-top: 1px solid #a09d9a; margin: 10px 0 4px; }
.split span { line-height: 20px; margin-bottom: 6px; }
.clip-tools { display: flex; flex-direction: column; gap: 21px; padding: 10px 0 0 27px; }
.caption { font-size: 12px; line-height: 16px; margin-bottom: -3px; }
.clip-cap { display: flex; justify-content: space-between; align-items: center; padding: 0 9px 0 41px; }
.group.voice { width: 106px; }
.voice .split { padding-top: 10px; }
.voice .caption { padding-right: 2px; }
.group.sens { width: 105px; }
.sens .split { color: #8a8683; }
.sens .split span { margin-top: 5px; }
.collapse { margin: auto 0 5px auto; }
.word-body { flex: 1; display: flex; padding: 0 0 0 4px; min-height: 0; }
.vruler text, .hruler text { fill: #fff; font-size: 12.5px; font-weight: 600; text-anchor: middle; }
.doc-col { padding: 3px 0 0 7px; }
.page { width: 907px; background: #fff; }
.page-a { height: 224px; margin-bottom: 22px; }
.page-b { height: 454px; box-shadow: 0 -1px #8a8a8a; display: flex; justify-content: space-between; padding: 65px 17px 0 32px; color: #828282; font: 18.5px/26px Lato, sans-serif; letter-spacing: .08px; }
.page-b span:last-child { letter-spacing: -.3px; }

/* Java windows */
.jwin { position: absolute; background: #eee; font: bold 12px/16px "Liberation Sans", Arial, sans-serif; color: #333; }
.jtitle { height: 38px; display: flex; align-items: center; justify-content: flex-end; gap: 45px; padding: 0 23px 0 9px; color: #fff; }
.jtitle.light { background: #fff; color: #888; padding-bottom: 1px; }
.jwin button { height: 26px; padding-top: 1px; border: 1px solid #7a8a99; background: linear-gradient(#e3ecf5, #fff 35%, #e6eef6 50%, #b8cfe5); }
.main-win { left: 9px; top: 1px; width: 982px; height: 590px; box-shadow: 0 2px 14px rgba(0,0,0,.55), 1px 1px #999; }
.main-win .jtitle { height: 37px; }
.main-win h1 { margin: 0; padding: 3px 111px 1px 0; text-align: right; font: bold 24px/27px "Liberation Sans", Arial, sans-serif; }
.jbuttons { display: flex; justify-content: flex-end; gap: 5px; padding: 6px 69px 0 0; }
.jbuttons button { width: 138px; }
.jbuttons button:first-child { width: 127px; }
.jbuttons button:last-child { width: 137px; }
.dialog { left: 8px; top: 0; width: 584px; height: 392px; border: 1px solid #0f79d2; border-top: 0; box-shadow: 0 3px 16px rgba(0,0,0,.5); }
.dialog .jtitle { background: #0078d7; }
.jtitle .ico { margin-right: -40px; }
.jtitle span { flex: 1; font: 14.5px "Open Sans", sans-serif; letter-spacing: -.3px; }
.frow { height: 58px; display: flex; justify-content: center; gap: 5px; padding-top: 5px; line-height: 22px; white-space: pre; letter-spacing: -.07px; }
.frow input { width: 113px; height: 19px; border: 1px solid #7a8a99; background: #fff; box-shadow: 1px 1px #fff; }
.frow label + input + label { padding-left: 1px; }
.r5 { height: 54px; line-height: 18px; letter-spacing: -.03px; }
.frow button { width: 56px; }
.frow button:last-child { width: 73px; }

/* taskbar */
.taskbar { height: 50px; background: #0a2033; display: flex; }
.start { width: 60px; display: grid; place-items: center; }
.search { width: 430px; background: #f2f4f6; border: 1px solid #b9bcbe; display: flex; align-items: center; gap: 15px; padding-left: 14px; font-size: 18px; letter-spacing: -.12px; color: #262626; }
.t { width: 62px; height: 50px; position: relative; display: grid; place-items: center; }
.cort { width: 60px; }
.view { width: 60px; margin-right: 3px; }
.run::after { content: ""; position: absolute; left: 6px; bottom: 0; width: 51px; height: 3px; background: #98c8ee; }
.run.stack::after { background: linear-gradient(90deg, #98c8ee 40px, #5d7f9c 40px, #7a9ebd 41px); }
.run.active { background: linear-gradient(90deg, #054f8a 56px, #063d6e 56px); }
.run.active::after { left: 0; width: 62px; }
.ijt { font: bold 11px "Liberation Mono", monospace; fill: #fff; }
.lt { font: bold 11.5px "Open Sans", sans-serif; fill: #fff; text-anchor: middle; }
.gt { font: italic bold 26px "Liberation Serif", serif; text-anchor: middle; }
.bt { font: bold 14px "Open Sans", sans-serif; fill: #fff; text-anchor: middle; }
.tray { flex: 1; display: flex; align-items: center; padding-left: 86px; color: #fff; }
.clock { width: 78px; margin: 0 18px 0 14px; display: flex; flex-direction: column; align-items: center; font-size: 14.5px; line-height: 23px; letter-spacing: -.2px; white-space: nowrap; }
.tray svg:first-child { margin-right: 21px; }
.note { margin-top: 10px; }
.peek { width: 1px; height: 50px; background: #6d7b86; margin-left: auto; margin-right: 5px; }
```
